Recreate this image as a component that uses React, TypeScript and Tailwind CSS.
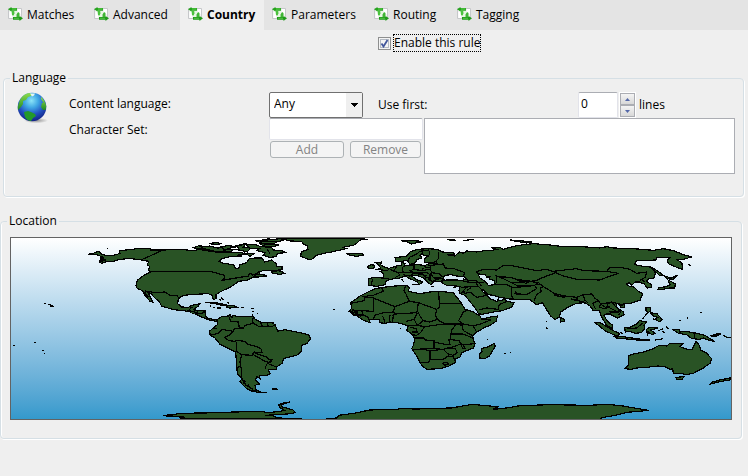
import React, { useState } from 'react';
import clsx from 'clsx';

const TABS = [
  { id: 'matches', label: 'Matches', width: 'w-[86px]' },
  { id: 'advanced', label: 'Advanced', width: 'w-[94px]' },
  { id: 'country', label: 'Country', width: 'w-[84px]' },
  { id: 'parameters', label: 'Parameters', width: 'w-[102px]' },
  { id: 'routing', label: 'Routing', width: 'w-[83px]' },
  { id: 'tagging', label: 'Tagging', width: 'w-[86px]' },
];

// white page with two green arrows going round
function RuleIcon() {
  return (
    <svg width="15" height="16" viewBox="0 0 15 16" className="shrink-0">
      <path d="M.5 1.500h13v10H.5z" fill="#f2f2f2" stroke="#c6c8ca" />
      <path d="M1.500 5h2.500v6H1.500zM10 2h3v5h-3z" fill="#fff" />
      <path d="M0 2.200 3.500 0v1H9v2.800H3.500v.8z" fill="#25a31d" />
      <path d="M4 1.500h4.500v1H4z" fill="#63d052" />
      <path d="M3.500 3.500h3v3L5.500 9 4 8z" fill="#4cc23f" />
      <path d="M15 11.300 11.500 14v-1.200H5V10h6.500V9z" fill="#1f9a19" />
      <path d="M6 10.800h5v.8H6z" fill="#63d052" />
      <path d="M8.500 7.500 10 5l1.500 1v4h-3z" fill="#3fb534" />
      <path d="M6.500 4h2L9.500 5.500 8 7.500v2.500H5.500V8.500L7 6.500z" fill="#e6f7e1" />
    </svg>
  );
}

function GlobeIcon() {
  return (
    <svg width="32" height="32" viewBox="0 0 32 32">
      <defs>
        <radialGradient id="sea" cx="0.48" cy="0.28" r="0.7">
          <stop offset="0" stopColor="#8be4f7" />
          <stop offset="0.35" stopColor="#3fa6e4" />
          <stop offset="0.7" stopColor="#2150c0" />
          <stop offset="1" stopColor="#14268a" />
        </radialGradient>
        <linearGradient id="grass" x1="0" y1="0" x2="0" y2="1">
          <stop offset="0" stopColor="#8fdc4e" />
          <stop offset="1" stopColor="#1f8a22" />
        </linearGradient>
        <radialGradient id="shade">
          <stop offset="0" stopColor="#777" stopOpacity="0.8" />
          <stop offset="1" stopColor="#777" stopOpacity="0" />
        </radialGradient>
      </defs>
      <ellipse cx="19" cy="28.500" rx="12" ry="2.800" fill="url(#shade)" />
      <circle cx="15" cy="15" r="14.300" fill="url(#sea)" />
      <path d="M2 11C3 6 7 2 12 1l3 1-1 2-3 1-2 3-3 1 0 3-2 3-3 3C.6 15 1 13 2 11z" fill="url(#grass)" />
      <path d="M7 20l4-1 3 1 4 2 1 2-3 2-2 3c-3-.3-5-2-6-4z" fill="#23992a" />
      <path d="M24 5c2 2 3.500 3 4 6l-2-1-2-3zM25 11l3-1 1.300 4-.8 4-2.500 0-2-3z" fill="url(#grass)" />
      <path d="M13 1.500l5 0-1 2-2 1z" fill="#e8f6f0" />
    </svg>
  );
}

// Outlines are traced on a grid three times finer than the drawn map
const AMERICAS = [
  // North and Central America
  'M-125 67L-110 64L-93 57L-85 67L-70 71L-45 69L-30 64L-32 56L10 52L20 49L60 49L62 54L100 54L155 52L185 56L215 52L240 57L270 62L300 60L335 62L345 66L320 70L335 72L300 74L275 80L268 88L280 94L310 98L318 110L326 110L330 98L350 92L358 80L375 78L395 78L404 90L425 84L438 95L440 103L456 105L456 112L435 116L400 116L385 120L390 127L410 131L395 134L370 136L350 145L325 148L310 160L295 168L270 180L258 188L258 200L250 203L246 190L235 185L195 187L160 190L145 200L143 215L155 225L175 226L185 220L210 215L205 222L190 233L205 236L225 237L226 250L232 258L250 262L262 262L258 268L235 263L215 255L200 248L175 238L150 235L130 233L95 222L88 210L75 198L62 184L52 180L58 190L68 210L60 208L45 190L38 176L22 170L18 160L22 145L45 128L62 120L55 114L60 105L52 98L56 88L35 84L5 80L-5 80L-30 82L-50 88L-68 88L-85 94L-92 90L-72 84L-88 84L-78 78L-90 79L-83 75L-100 68Z',
  // Greenland
  'M455 20L480 27L515 28L520 36L532 42L534 52L514 60L512 72L520 76L535 82L545 82L560 70L590 62L605 60L640 52L650 50L640 46L670 40L680 34L690 24L715 22L690 20Z',
  // arctic islands
  'M190 47L210 40L225 46L222 54L205 52Z',
  'M212 44L240 42L262 48L280 47L282 58L250 58L225 54Z',
  'M236 34L262 32L275 35L250 38Z',
  'M272 44L300 40L312 46L290 50L310 56L290 60Z',
  'M318 40L345 38L340 46L362 48L352 60L330 54Z',
  'M345 36L378 38L392 44L425 46L430 54L455 56L468 62L442 64L440 74L420 76L400 70L405 62L380 56L388 50L362 50Z',
  'M375 26L410 24L450 20L462 24L440 30L430 36L405 36Z',
  'M390 34L420 38L448 38L430 44L400 42Z',
  'M350 66L372 64L360 74Z',
  'M200 50L240 52M215 56L270 58M285 52L330 54M300 44L318 42M340 58L350 70M390 30L440 28M396 24L420 20M440 20L480 20M412 52L420 64',
  'M425 120L445 116L455 118L463 124L450 127L428 124Z',
  'M375 126L410 130L408 134L372 132Z',
  // Caribbean
  'M226 211L245 211L270 214L290 219L272 219L250 214Z',
  'M290 222L310 220L322 226L300 228L290 226Z',
  'M262 228L274 228M334 227L343 227M268 202L274 206M274 196L280 204M292 210L298 214M364 230L372 230M368 236L370 240M366 248L368 254M380 244L384 244M240 222L244 222M250 226L254 226M610 232L614 232',
  // South America
  'M262 262L275 254L296 252L300 247L306 258L308 250L325 254L370 253L376 262L390 270L430 273L440 288L442 298L465 293L500 300L535 308L542 320L530 335L515 340L513 360L500 370L470 377L460 380L458 393L440 405L440 412L418 412L415 415L420 425L410 430L388 430L390 440L380 434L376 444L388 456L375 460L378 474L366 478L350 470L335 455L330 448L336 440L322 425L320 400L317 360L290 347L270 337L255 318L238 308L238 298L250 288L262 278Z',
  'M366 476L380 474L390 480L410 482L385 482Z',
  'M427 470L438 469L442 473L428 473Z',
  // Hawaii
  'M-258 214L-252 215M-247 216L-243 217M-240 218L-233 221L-228 224L-238 223Z',
  'M-70 49L-66 50',
  'M48 176L44 184L56 196',
  'M170 236L188 238L204 244L196 246',
];

const AMERICA_BORDERS =
  'M100 54L35 83M62 119L245 119L262 124L283 130L285 138L273 146L300 141L330 136L355 132L358 124L372 128M365 130L390 120M52 178L75 182L105 180L120 190L140 190L148 200M175 238L182 228L190 226M205 236L200 244M225 238L212 246M232 258L240 264' +
  'M296 252L302 268L325 270L328 288L310 292L311 298L285 294L275 292L268 302L250 308L240 306M262 290L248 290M311 298L300 308L285 316L296 326L316 328L318 325L345 328L352 336L380 344L395 352L396 362L372 360L366 370L335 368L320 358L320 330M372 362L395 370L412 376L415 382L426 384L420 392L405 388L370 368' +
  'M335 368L330 390L335 415L335 440L348 460L370 472M440 405L412 394L406 406L406 412M412 394L424 386M372 256L366 264L370 274L388 284L400 284L414 282L425 284L438 278M392 272L398 284M412 273L414 282M370 274L345 280L340 288L328 288' +
  'M322 408L330 402M336 444L345 448L340 456M340 450L350 462M354 458L364 470';

const OLD_WORLD = [
  // Europe and Asia, with the Black Sea, the Caspian and the Gulf cut out
  'M195 78L215 74L230 72L240 60L262 52L295 50L320 52L338 60L370 62L374 68L350 68L375 72L388 60L400 64L410 57L440 60L462 56L480 56L500 52L482 46L510 46L520 52L540 46L555 42L580 38L610 35L650 38L670 40L690 43L740 43L810 48L830 44L850 48L910 50L970 55L1000 50L1030 56L1060 68L1085 75L1060 82L1040 82L1056 94L1057 112L1040 106L1015 95L1012 85L1020 78L980 76L978 84L920 86L913 98L940 103L960 104L972 114L976 125L972 138L952 142L950 148L965 158L965 166L952 168L943 156L925 150L915 150L905 160L898 152L888 156L900 164L912 165L925 178L938 185L930 205L905 213L875 217L860 215L860 226L880 240L882 248L862 258L850 252L838 246L828 246L822 250L832 268L848 280L848 290L830 280L815 255L808 235L790 236L780 222L765 212L740 214L715 225L692 240L688 255L675 263L662 252L645 225L638 212L620 218L600 203L540 201L510 196L490 190L475 188L458 172L455 176L470 190L480 200L500 208L525 202L530 208L553 212L545 225L520 235L490 240L455 247L445 245L440 235L425 215L405 190L390 185L387 175L390 163L350 160L335 152L335 147L310 150L303 158L295 152L280 138L262 130L245 132L258 142L278 150L268 158L262 150L240 140L225 132L210 138L195 140L180 142L168 148L165 158L140 163L115 160L115 140L130 137L160 138L160 125L150 118L170 113L180 108L200 102L215 100L214 92L226 94L222 102L260 98L286 100L300 94L320 94L285 92L283 80L295 72L275 68L278 62L270 70L276 78L262 82L255 92L240 98L232 85L215 88L198 88Z' +
    'M340 136L345 130L365 128L378 132L400 133L410 140L398 145L360 143L342 145Z' +
    'M445 128L465 128L470 135L480 135L478 142L492 145L495 158L475 160L465 148L450 138Z',
  // Africa
  'M135 170L160 166L195 162L230 160L238 168L235 178L270 185L300 180L325 178L370 182L376 190L392 210L405 232L430 240L450 252L455 262L480 255L503 252L498 268L480 280L465 286L440 300L428 310L430 325L435 335L430 348L395 362L390 375L378 380L375 392L355 403L330 410L290 412L275 400L262 375L245 350L250 340L255 320L245 305L230 295L235 282L225 278L200 272L180 270L165 274L148 272L148 262L135 262L118 264L120 272L100 265L78 250L58 238L65 228L62 212L80 200L90 192L110 182Z',
  // British Isles and Iceland
  'M136 92L155 90L152 98L160 104L178 110L172 116L142 112L152 108L145 98Z',
  'M112 104L124 98L134 100L132 108L116 110Z',
  'M52 66L75 64L98 64L100 69L80 73L60 70Z',
  // Svalbard and the northern islands
  'M213 26L245 26L280 28L262 32L245 36L232 30Z',
  'M350 23L372 23L376 26L360 26M400 26L415 24L432 22',
  'M540 24L570 26L605 30L590 33L560 28Z',
  'M245 158L266 158M215 142L222 150M370 166L378 168M302 164L312 164M210 291L214 290M10 232L14 232M470 322L473 323M523 364L527 365M539 361L542 362M648 268L651 268M650 284L652 292M508 196L502 206',
  // Madagascar
  'M492 334L496 342L490 352L478 372L465 380L450 378L448 366L456 358L454 350L470 346L482 340Z',
  // Sri Lanka, Taiwan, Hainan
  'M690 256L702 262L704 268L692 270Z',
  'M870 220L884 218L882 226L872 226Z',
  // Japan and Sakhalin
  'M958 104L975 112L990 122L1000 130L990 132L978 120Z',
  'M1004 132L1024 138L1042 130L1030 142L1012 140Z',
  'M1014 144L1026 150L1036 156L1034 168L1018 168L1000 172L984 172L986 168L1008 164L1020 158Z',
  'M1074 98L1084 100',
  // Philippines
  'M948 228L960 226L962 236L955 242L948 236Z',
  'M960 240L975 246L980 244L996 262L990 270L975 262L984 256L970 252Z',
  'M952 244L938 260M968 260L978 264M1048 266L1052 265M1072 256L1074 260M1110 241L1116 241',
  // Borneo, Sumatra, Java, Sulawesi
  'M884 288L900 286L920 276L928 266L950 270L942 280L945 288L935 302L915 304L900 298L886 300Z',
  'M794 271L812 273L830 284L850 296L868 304L866 312L850 308L825 296Z',
  'M852 313L880 314L905 318L935 322L960 324L940 326L900 322L860 318Z',
  'M950 292L958 286L985 288L962 294L975 304L965 308L956 300L952 308Z',
  'M975 324L1000 320M985 296L1000 290M995 298L1006 302M1008 284L1016 290M870 302L878 304',
  // New Guinea
  'M1030 294L1048 292L1050 300L1068 298L1100 304L1125 310L1140 320L1154 328L1140 326L1120 318L1110 322L1085 320L1070 308L1045 304Z',
  'M1142 312L1158 306L1172 306L1160 312ZM1180 310L1190 316L1205 318',
  // Australia and Tasmania
  'M895 372L910 366L940 360L965 352L988 340L1010 342L1020 334L1060 334L1050 344L1072 352L1086 352L1098 328L1108 340L1112 354L1128 362L1145 380L1140 394L1120 408L1090 424L1070 428L1050 424L1030 424L1028 410L1020 412L1005 404L985 402L950 406L920 408L905 412L885 410L895 400Z',
  'M1038 436L1062 434L1056 442L1040 442Z',
  // New Zealand
  'M1148 450L1170 444L1190 440L1210 435L1198 444L1165 450L1142 456Z',
];

const OLD_WORLD_BORDERS =
  // Africa
  'M155 166L160 178L130 190L96 194M130 196L130 238L95 236L66 234M130 196L105 196L102 206L64 214M130 198L195 224L238 208L228 186L222 176L226 162M238 208L265 212L320 232M326 180L328 214L392 214M328 214L328 226L320 232L316 250L322 262L300 270L280 266L272 256L262 236L265 212M195 224L190 240L160 242L134 250L130 262M190 240L196 246L260 242L262 236M190 246L188 270M180 250L178 270M158 252L165 272M196 246L188 252M262 242L252 262L228 268M252 262L262 280L234 282M262 280L280 266M262 280L284 284L340 276L376 276L400 276L386 266L400 240L410 236M400 276L430 282L452 276L482 264L452 260M430 282L438 296M376 276L396 280L400 296L430 312M376 280L364 296L366 306L398 306L430 318M284 284L272 302L260 310L246 308M240 286L258 290L262 300L246 300M256 318L282 318L285 324L312 326L312 350L248 352M312 330L340 336L360 338L356 322L388 326L392 336L372 344L352 348L340 352L312 350M364 300L360 322M392 336L412 338L434 334M392 336L398 350L406 350L400 340M352 348L376 350L382 362L370 370L354 366L340 352M300 354L300 382L340 382L354 372L370 374M280 352L300 356L340 352M300 382L296 392L268 392M338 394L348 390L356 396L344 400ZM370 370L374 386M66 234L82 240L78 250L92 252M82 246L100 250L112 254L118 264M95 236L100 250M60 238L80 244L72 250L64 244ZM346 276L330 268L322 262' +
  // Europe
  'M160 138L180 142M128 140L124 160M178 110L192 118L206 122L208 130L196 136M206 122L218 120L218 104M192 116L200 104M218 120L240 122L262 124L290 122L300 128L300 138L282 134M218 128L240 132L250 124L264 120L280 124M252 100L252 112L240 116L252 122M252 112L275 116L300 112L302 100L290 98M300 112L306 122L330 126L338 136M302 100L340 96L345 108L372 110L404 122L400 133M300 124L312 138L334 138L306 148L298 140M306 122L304 132M326 60L325 80L318 88L322 96M320 88L300 94M282 104L302 108M296 54L300 66L294 72M296 54L270 58L260 66L238 76L236 86M288 130L286 142M292 136L302 148M275 116L280 108M330 138L350 146M264 128L280 128L288 134' +
  // Middle East and Central Asia
  'M335 147L350 146L398 146L412 150L438 152L444 162L425 164L392 166M398 140L420 146L438 146L446 152L455 162M438 152L462 152M412 164L396 180L406 184L420 180L440 196L470 190M444 162L456 174M424 166L410 176M446 234L470 228L504 232L508 218L530 208M504 232L512 238M390 186L404 178M438 120L460 112L500 114L520 100L540 100L580 108L620 116L650 112L668 118L680 120L672 124L640 136L618 146L600 148L560 142L540 136L500 134L500 150L496 156M495 130L520 140L560 160L600 160M496 158L530 158L546 166L544 190L550 202M546 166L590 164L614 160L624 152L600 148L588 154L556 142M552 184L590 188L620 170L614 160M556 176L560 186L588 188M600 148L618 152M612 206L620 188L634 178L630 168L640 164L630 156L614 158M540 152L580 150L600 146M438 120L448 126' +
  // China, Mongolia and the Far East
  'M668 118L740 110L760 116L830 118L840 106L870 106L900 112L920 124L950 120L946 136L934 142L945 150M668 118L700 132L740 142L810 144L830 136L866 124L830 118M934 142L928 150M640 164L660 176L672 184L705 192L740 196L760 188L786 186L794 198L806 206L812 216L846 210L866 216M676 184L674 190L704 196L706 192M740 196L738 204L760 210L768 216M722 200L740 206L744 196M760 188L764 204L774 212M806 206L788 214L796 230M812 216L808 226L824 230L836 226L852 234L864 240M812 216L826 226L840 222M836 226L830 214L846 212L872 240L866 250M842 246L840 240L866 240' +
  // islands
  'M890 290L920 288L940 272M1092 302L1094 320L1100 322';

const ANTARCTICA = [
  'M35 136L65 134L75 130L190 128L232 126L212 124L290 124L310 128L340 124L352 121L340 112L338 104L352 98L366 96L345 104L345 110L375 120L382 128L360 132L302 136L325 138L330 142L350 145L398 146L340 147L112 147L80 144L90 141L42 140L60 138Z',
  'M462 146L490 144L495 136L545 128L575 120L650 118L655 116L700 117L750 115L790 114L820 108L845 103L870 106L912 110L900 118L935 114L970 107L1050 104L1150 106L1200 103L1240 108L1280 116L1307 121L1280 124L1250 127L1220 136L1185 143L1180 149L490 149Z',
];

function WorldMap() {
  return (
    <svg
      viewBox="11 238 720 181"
      className="block h-auto w-full border border-[#636363] bg-linear-to-b from-white to-[#3399cc]"
      role="img"
      aria-label="World map"
      shapeRendering="crispEdges"
      fillRule="evenodd"
      fill="#295325"
      stroke="#000"
      strokeWidth="3.600"
    >
      <g transform="translate(130 232) scale(0.33333)">
        {AMERICAS.map((d) => (
          <path key={d} d={d} />
        ))}
        <path d={AMERICA_BORDERS} fill="none" />
      </g>
      <g transform="translate(330 232) scale(0.33333)">
        {OLD_WORLD.map((d) => (
          <path key={d} d={d} />
        ))}
        <path d={OLD_WORLD_BORDERS} fill="none" />
      </g>
      <g transform="translate(150 370) scale(0.38144 0.33333)">
        {ANTARCTICA.map((d) => (
          <path key={d} d={d} />
        ))}
      </g>
      {/* Pacific atolls */}
      <path d="M13 345h2M34 342h2M42 350h2M44 353h1" strokeWidth="1" />
    </svg>
  );
}

interface GroupProps {
  title: string;
  className?: string;
  children: React.ReactNode;
}

function Group({ title, className, children }: GroupProps) {
  return (
    <fieldset
      className={clsx(
        'min-w-0 rounded border border-[#d5dfe5] shadow-[inset_1px_0_0_#fff,1px_1px_0_#fff]',
        className
      )}
    >
      <legend className="ml-1.5 px-0.5">{title}</legend>
      {children}
    </fieldset>
  );
}

export default function App() {
  const [activeTab, setActiveTab] = useState('country');
  const [enabled, setEnabled] = useState(true);
  const [lines, setLines] = useState(0);

  return (
    <div className="min-h-screen bg-[#efefef] font-['Open_Sans','Noto_Sans',sans-serif] text-[12px] leading-4 text-black">
      {/* Tabs */}
      <nav className="flex h-[30px] bg-[#e4e4e4]" role="tablist">
        {TABS.map((tab) => (
          <button
            key={tab.id}
            role="tab"
            aria-selected={tab.id === activeTab}
            onClick={() => setActiveTab(tab.id)}
            className={clsx(
              'flex shrink-0 items-center gap-1 pl-2 whitespace-nowrap',
              tab.width,
              tab.id === activeTab && 'bg-[#efefef] font-bold'
            )}
          >
            <RuleIcon />
            {tab.label}
          </button>
        ))}
      </nav>

      <div className="flex pt-1 pl-[378px]">
        <label className="flex items-center gap-0.5">
          <span className="relative size-[13px]">
            <input
              type="checkbox"
              checked={enabled}
              onChange={(e) => setEnabled(e.target.checked)}
              className="block size-full appearance-none border border-[#8e8f8f] bg-[#f4f4f4] shadow-[inset_0_0_0_1px_#f4f4f4,inset_0_0_0_2px_#b4bac3]"
            />
            {enabled && (
              <svg width="9" height="9" viewBox="0 0 9 9" className="pointer-events-none absolute top-0.5 left-0.5">
                <path d="M1.500 4.500 3.500 7.500 7.500 1" fill="none" stroke="#42579b" strokeWidth="1.800" />
              </svg>
            )}
          </span>
          <span className="border border-dotted border-black">Enable this rule</span>
        </label>
      </div>

      {/* Language */}
      <Group title="Language" className="mt-[18px] mr-1 ml-[3px]">
        <div className="grid grid-cols-[52px_200px_1fr] pt-1.5 pr-2 pb-[22px] pl-[13px]">
          <div className="row-span-2">
            <GlobeIcon />
          </div>

          <label htmlFor="language" className="pt-1">
            Content language:
          </label>
          <div className="flex h-[26px] items-center">
            <div className="relative h-[26px] w-[94px]">
              <select
                id="language"
                className="h-full w-full appearance-none rounded-xs border border-[#707070] bg-white px-1 pb-0.5"
              >
                <option>Any</option>
              </select>
              <span className="pointer-events-none absolute inset-y-px right-px flex w-4 items-center justify-center bg-[#efefef]">
                <svg width="7" height="4" viewBox="0 0 7 4" shapeRendering="crispEdges">
                  <path d="M0 0h7v1H6v1H5v1H4v1H3V3H2V2H1V1H0z" />
                </svg>
              </span>
            </div>
            <label htmlFor="lines" className="w-[215px] pl-[15px]">
              Use first:
            </label>
            <input
              id="lines"
              inputMode="numeric"
              value={lines}
              onChange={(e) => setLines(Number(e.target.value) || 0)}
              className="h-full w-10 rounded-xs border border-[#e2e3ea] border-t-[#abadb3] bg-white px-0.5 pb-1"
            />
            <span className="ml-px flex h-full w-[17px] flex-col border border-white">
              <button
                aria-label="More lines"
                onClick={() => setLines(lines + 1)}
                className="flex flex-1 items-center justify-center border border-[#abadb3] bg-linear-to-b from-[#f4f4f4] to-[#d8d8d8]"
              >
                <svg width="5" height="3" viewBox="0 0 5 3" fill="#5468a8">
                  <path d="M0 3 2.500 0 5 3z" />
                </svg>
              </button>
              <button
                aria-label="Fewer lines"
                onClick={() => setLines(Math.max(0, lines - 1))}
                className="flex flex-1 items-center justify-center border border-[#abadb3] bg-linear-to-b from-[#f4f4f4] to-[#d8d8d8]"
              >
                <svg width="5" height="3" viewBox="0 0 5 3" fill="#5468a8">
                  <path d="M0 0h5L2.500 3z" />
                </svg>
              </button>
            </span>
            <span className="pl-[3px]">lines</span>
          </div>

          <label htmlFor="charset" className="pt-1">
            Character Set:
          </label>
          <div className="flex">
            <div className="w-[154px] shrink-0">
              <input
                id="charset"
                className="block h-[22px] w-full rounded-xs border border-[#e2e3ea] border-t-[#abadb3] bg-white px-1"
              />
              <div className="flex gap-1.5 pt-px pr-0.5 pl-px">
                <button
                  disabled
                  className="h-[17px] w-[74px] rounded-[3px] border border-[#adb2b5] bg-[#f4f4f4] leading-[15px] text-[#838383]"
                >
                  Add
                </button>
                <button
                  disabled
                  className="h-[17px] flex-1 rounded-[3px] border border-[#adb2b5] bg-[#f4f4f4] leading-[15px] text-[#838383]"
                >
                  Remove
                </button>
              </div>
            </div>
            <textarea
              aria-label="Selected character sets"
              className="ml-px block h-14 flex-1 resize-none border border-[#abadb3] bg-white p-1"
            />
          </div>
        </div>
      </Group>

      {/* Location */}
      <Group title="Location" className="mt-4 mr-1.5">
        <div className="px-[9px] pt-2 pb-[18px]">
          <WorldMap />
        </div>
      </Group>
    </div>
  );
}
